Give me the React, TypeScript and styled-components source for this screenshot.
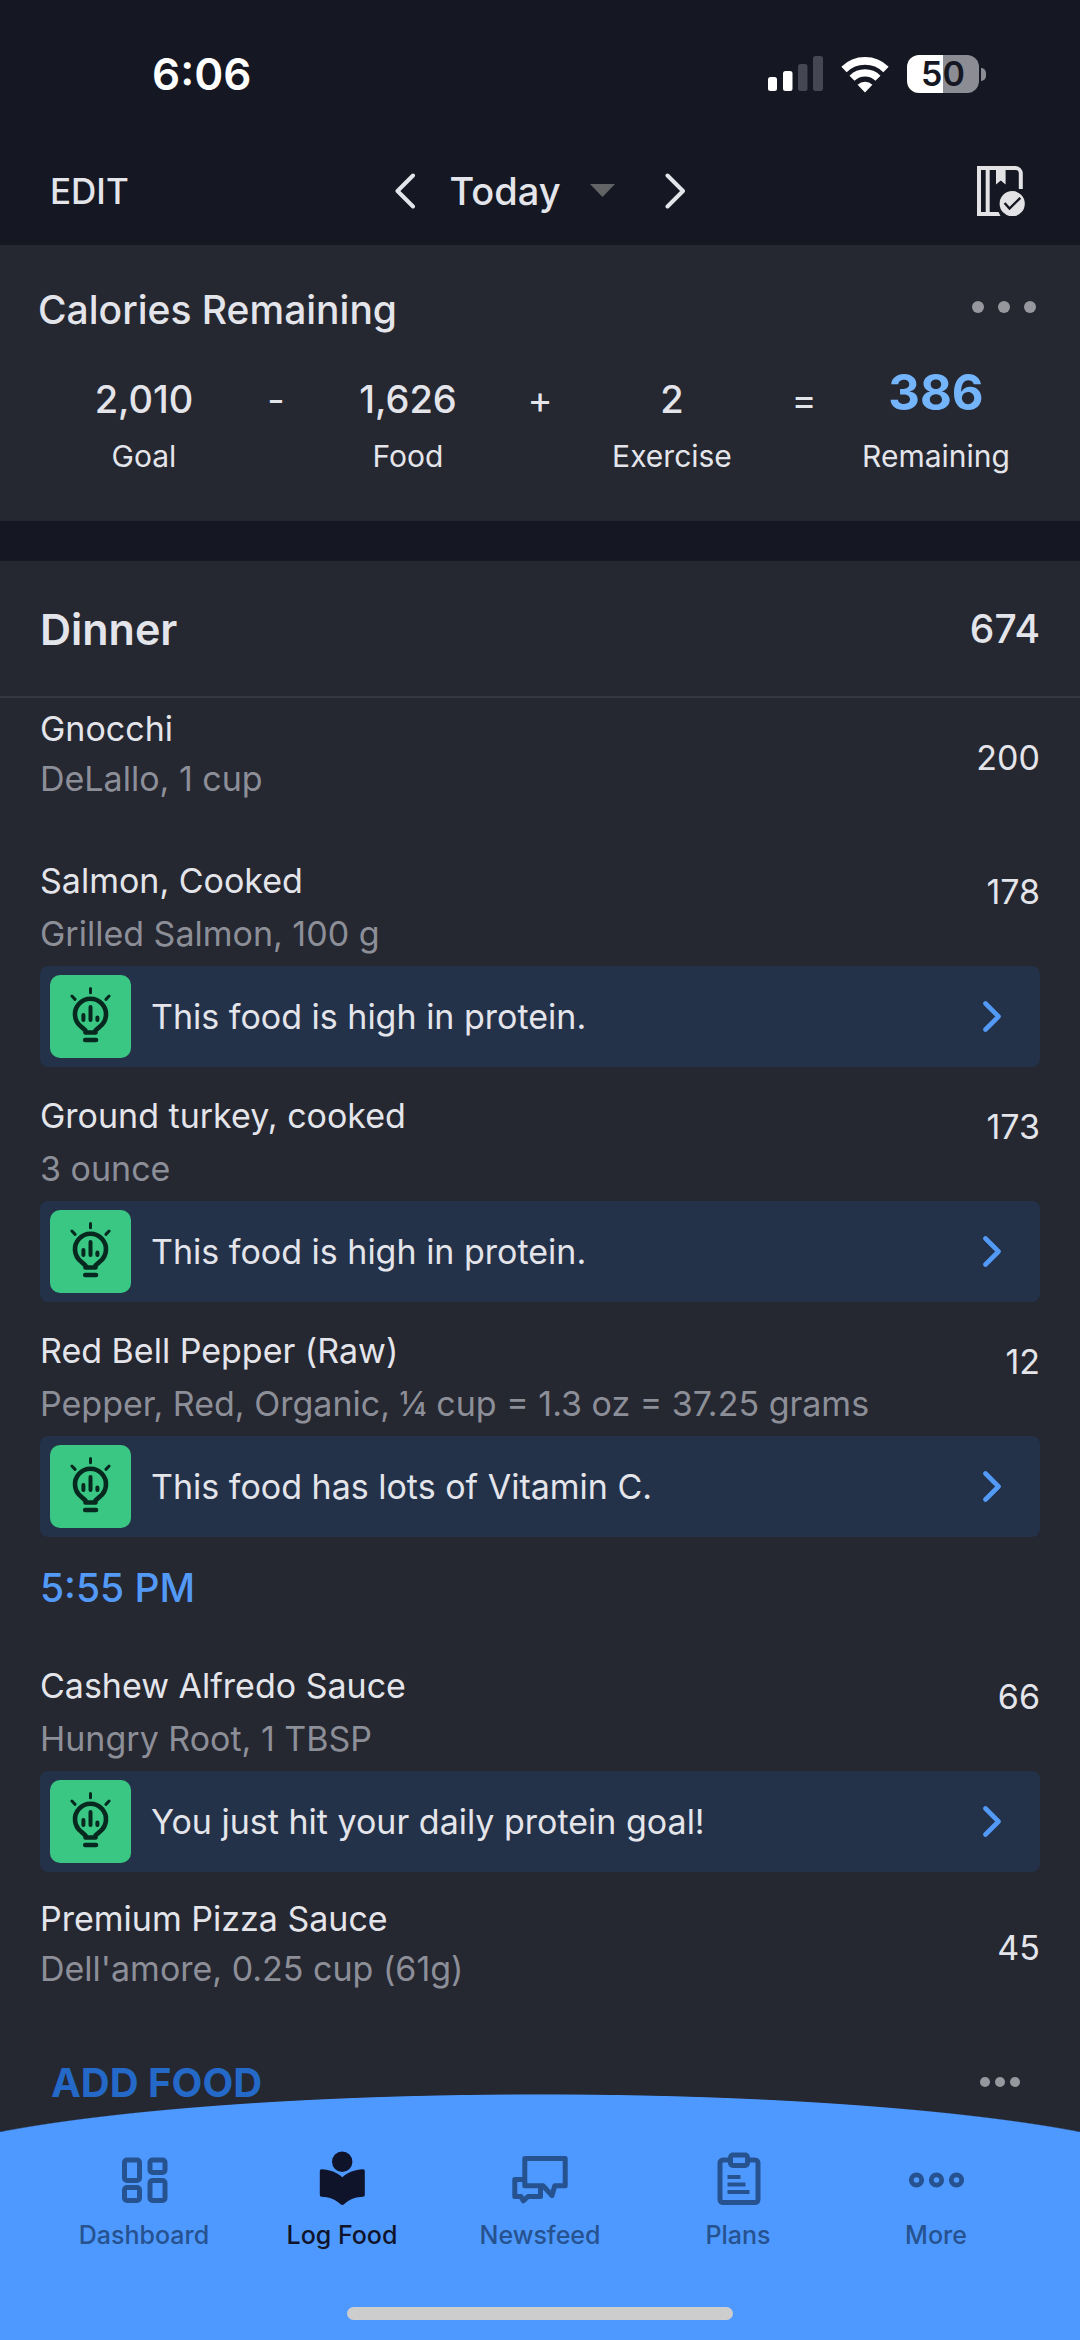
import React from "react";
import styled, { createGlobalStyle, css } from "styled-components";

const color = {
  base: "#151722",
  panel: "#252731",
  line: "#343642",
  text: "#e4e5eb",
  muted: "#8d8f98",
  blue: "#5399f6",
  brand: "#4e99ff",
  insight: "#233149",
  green: "#39c783",
};

const GlobalStyle = createGlobalStyle`
  *, *::before, *::after { box-sizing: border-box; }
  body {
    margin: 0;
    background: ${color.base};
    color: ${color.text};
    font-family: Inter, "Liberation Sans", sans-serif;
  }
  h1, h2, p, ul, dl, dd, dt { margin: 0; padding: 0; font: inherit; }
  ul { list-style: none; }
  svg { display: block; flex: none; }
`;

const Screen = styled.div`
  display: flex;
  flex-direction: column;
  height: 100vh;
  overflow: hidden;
`;

const StatusBar = styled.div`
  display: flex;
  flex: none;
  align-items: center;
  justify-content: space-between;
  height: 136px;
  padding: 12px 94px 0 152px;
`;

const Clock = styled.span`
  color: #fff;
  font-size: 44px;
  font-weight: 600;
`;

const StatusIcons = styled.div`
  display: flex;
  align-items: center;
  gap: 18px;
`;

const Battery = styled.div`
  display: flex;
  align-items: center;
  gap: 2px;
`;

const BatteryBody = styled.div`
  width: 72px;
  height: 38px;
  border-radius: 12px;
  background: linear-gradient(90deg, #fff 50%, #8c8d94 50%);
  color: ${color.base};
  font-size: 34px;
  font-weight: 600;
  line-height: 38px;
  text-align: center;
`;

const BatteryTip = styled.div`
  width: 5px;
  height: 13px;
  border-radius: 0 6px 6px 0;
  background: #8c8d94;
`;

const IconButton = styled.button`
  display: flex;
  align-items: center;
  padding: 0;
  border: 0;
  background: none;
  color: inherit;
  font: inherit;
`;

const TopBar = styled.header`
  display: grid;
  flex: none;
  grid-template-columns: 1fr auto 1fr;
  align-items: center;
  height: 109px;
  padding: 0 55px 0 50px;
`;

const EditButton = styled(IconButton)`
  justify-self: start;
  font-size: 35px;
  font-weight: 500;
`;

const DayPicker = styled.div`
  display: flex;
  align-items: center;
  gap: 50px;
  margin-left: 5px;
`;

const DayButton = styled(IconButton)`
  gap: 29px;
  margin-left: -16px;
  font-size: 38px;
  font-weight: 500;
`;

const DiaryButton = styled(IconButton)`
  justify-self: end;
`;

const Summary = styled.section`
  flex: none;
  height: 276px;
  padding: 36px 38px 0;
  background: ${color.panel};
`;

const SummaryHead = styled.div`
  display: flex;
  align-items: center;
  justify-content: space-between;
  height: 56px;
  padding-right: 6px;
`;

const SummaryTitle = styled.h1`
  font-size: 39px;
  font-weight: 500;
`;

const SummaryMenu = styled(IconButton)`
  align-self: flex-start;
  height: 52px;
`;

const Equation = styled.dl`
  display: grid;
  grid-template-columns: repeat(7, minmax(0, 1fr));
  padding: 24px 40px 0;
`;

const Term = styled.div`
  display: flex;
  flex-direction: column-reverse;
  align-items: center;
  justify-content: flex-end;
  white-space: nowrap;
`;

const TermValue = styled.dd<{ $result?: boolean }>`
  height: 76px;
  font-size: 38px;
  font-weight: 500;
  line-height: 76px;
  ${(p) =>
    p.$result &&
    css`
      color: #74b4fb;
      font-size: 49px;
      font-weight: 700;
      line-height: 64px;
    `}
`;

const TermLabel = styled.dt`
  font-size: 30px;
  line-height: 38px;
`;

const Sign = styled.div`
  font-size: 38px;
  line-height: 76px;
  text-align: center;
`;

const Meal = styled.main`
  flex: 1;
  min-height: 0;
  margin-top: 40px;
  background: ${color.panel};
  overflow: hidden;
`;

const MealHead = styled.header`
  display: flex;
  align-items: center;
  justify-content: space-between;
  height: 137px;
  padding: 0 40px;
  border-bottom: 2px solid ${color.line};
`;

const MealName = styled.h2`
  font-size: 43px;
  font-weight: 600;
`;

const MealTotal = styled.span`
  font-size: 39px;
  font-weight: 500;
`;

const FoodList = styled.ul`
  padding: 0 40px;
`;

const Food = styled.li<{ $plain: boolean }>`
  padding-bottom: ${(p) => (p.$plain ? 30 : 16)}px;
`;

const FoodRow = styled.div<{ $plain: boolean }>`
  display: flex;
  justify-content: space-between;
  height: ${(p) => (p.$plain ? 120 : 118)}px;
  font-size: 34px;
`;

const FoodText = styled.div<{ $plain: boolean }>`
  display: flex;
  flex-direction: column;
  gap: ${(p) => (p.$plain ? 0 : 3)}px;
  padding-top: ${(p) => (p.$plain ? 6 : 8)}px;
  line-height: 50px;
`;

const FoodDetail = styled.p`
  color: ${color.muted};
`;

const FoodCalories = styled.span<{ $plain: boolean }>`
  line-height: ${(p) => (p.$plain ? 120 : 88)}px;
`;

const Insight = styled.button`
  display: flex;
  align-items: center;
  width: 100%;
  height: 101px;
  padding: 0 39px 0 10px;
  border: 0;
  border-radius: 8px;
  background: ${color.insight};
  color: ${color.text};
  font: inherit;
  font-size: 34px;
  text-align: left;
`;

const InsightBadge = styled.span`
  display: flex;
  width: 81px;
  height: 83px;
  margin-right: 20px;
  border-radius: 10px;
  background: ${color.green};
`;

const InsightText = styled.span`
  flex: 1;
`;

const MealTime = styled.li`
  padding-bottom: 30px;
  color: ${color.blue};
  font-size: 39px;
  font-weight: 500;
  line-height: 70px;
`;

const MealActions = styled.div`
  display: flex;
  align-items: center;
  justify-content: space-between;
  height: 88px;
  padding: 0 60px 0 51px;
`;

const AddFood = styled(IconButton)`
  color: #2469c8;
  font-size: 40px;
  font-weight: 700;
`;

const Dots = styled.span<{ $size: number; $gap: number }>`
  display: flex;
  gap: ${(p) => p.$gap}px;

  i {
    width: ${(p) => p.$size}px;
    height: ${(p) => p.$size}px;
    border-radius: 50%;
    background: #97989e;
  }
`;

const TabBar = styled.nav`
  z-index: 1;
  flex: none;
  margin-top: -37px;
  padding: 57px 45px 20px;
  background:
    radial-gradient(61% 87px at 50% 87px, ${color.brand} 99%, transparent 100%) no-repeat,
    linear-gradient(${color.brand}, ${color.brand}) 0 38px no-repeat;
`;

const Tabs = styled.ul`
  display: grid;
  grid-template-columns: repeat(5, 1fr);
`;

const Tab = styled.a<{ $active?: boolean }>`
  display: flex;
  flex-direction: column;
  align-items: center;
  gap: 12px;
  color: ${(p) => (p.$active ? "#10142a" : "#26528f")};
  font-size: 25px;
  font-weight: 500;
  line-height: 32px;
  text-decoration: none;
`;

const HomeIndicator = styled.div`
  width: 39%;
  height: 13px;
  margin: 56px auto 0;
  border-radius: 7px;
  background: #cdcdcd;
`;

const Chevron = ({ left, small }: { left?: boolean; small?: boolean }) => (
  <svg
    width={small ? 18 : 20}
    height={small ? 31 : 36}
    viewBox={small ? "0 0 18 31" : "0 0 20 36"}
    fill="none"
    stroke={small ? color.blue : "currentColor"}
    strokeWidth={small ? 4.6 : 4}
    strokeLinecap="round"
    strokeLinejoin="round"
  >
    {small ? (
      <path d="M2.500 2.500 15.500 15.500 2.500 28.500" />
    ) : (
      <path d={left ? "M18 2.500 2.500 18 18 33.500" : "M2.500 2.500 18 18 2.500 33.500"} />
    )}
  </svg>
);

const Signal = () => (
  <svg width="55" height="36" viewBox="0 0 55 36">
    <rect x="0" y="21" width="9" height="14" rx="2.5" fill="#fff" />
    <rect x="15" y="15" width="9.5" height="20" rx="2.5" fill="#fff" />
    <rect x="30" y="8" width="9.5" height="27" rx="2.5" fill="#454753" />
    <rect x="45" y="0" width="10" height="35" rx="2.5" fill="#454753" />
  </svg>
);

const Wifi = () => (
  <svg width="48" height="37" viewBox="0 0 48 37" fill="none" stroke="#fff" strokeWidth="7.6">
    <path d="M3 13.5a30 30 0 0 1 42 0" />
    <path d="M11 22.2a18.5 18.5 0 0 1 26 0" strokeWidth="7.2" />
    <path d="M24 36.5 16.6 28.8a10.5 10.5 0 0 1 14.8 0Z" fill="#fff" stroke="none" />
  </svg>
);

const DiaryIcon = () => (
  <svg width="48" height="50" viewBox="0 0 48 50" fill="none">
    <path d="M43.8 23V7.5a5.5 5.5 0 0 0-5.5-5.5H2v46h19" stroke="#e3e3e5" strokeWidth="4" />
    <path d="M20 46h1.5l2 4H19Z" fill="#e3e3e5" />
    <path d="M10.7 2v46" stroke="#e3e3e5" strokeWidth="4" />
    <path d="M19 2h9.6v16.4l-4.8-4-4.8 4Z" fill="#e3e3e5" />
    <circle cx="35.2" cy="37.7" r="12.6" fill="#e3e3e5" />
    <path d="m27.6 37 4.9 5.6 10.8-10.8" stroke={color.base} strokeWidth="2.4" />
  </svg>
);

const BulbIcon = () => (
  <svg
    width="81"
    height="83"
    viewBox="0 0 81 83"
    fill="none"
    stroke="#06281e"
    strokeWidth="4.6"
    strokeLinecap="round"
  >
    <path
      d="M35.500 57.500V55.500L31 51.500A15.500 15.500 0 1 1 50 51.500L45.500 55.500V57.500Z"
      strokeLinejoin="round"
    />
    <path d="M35.200 65h10.800" />
    <path d="M40.500 32v13M33.400 40v5M47.400 42.500v2.500" strokeWidth="4" />
    <path d="M40.500 13.400v4.400M21.900 21l3.200 3.400M59.100 21l-3.200 3.400" strokeWidth="3" />
  </svg>
);

const DashboardIcon = () => (
  <svg width="56" height="56" viewBox="0 0 56 56" fill="none" stroke="currentColor" strokeWidth="5">
    <rect x="8.5" y="9" width="15" height="20.5" rx="2.5" />
    <rect x="34" y="9" width="15" height="12.5" rx="2.5" />
    <rect x="8.5" y="36.5" width="15" height="13" rx="2.5" />
    <rect x="34" y="29.5" width="15" height="20" rx="2.5" />
  </svg>
);

const LogFoodIcon = () => (
  <svg width="56" height="56" viewBox="0 0 56 56" fill="currentColor">
    <circle cx="28.2" cy="10.8" r="10.2" />
    <path d="M28.3 26.2C23 21.5 16 18.4 7.5 18.2A1.8 1.8 0 0 0 5.8 20v24a1.8 1.8 0 0 0 1.7 1.8c7 .2 13.2 2.2 18.8 7.2 1.4 1.3 2.6 1.3 4 0 5.6-5 11.8-7 18.8-7.2A1.8 1.8 0 0 0 50.8 44V20a1.8 1.8 0 0 0-1.7-1.8C40.6 18.4 33.6 21.5 28.3 26.2Z" />
  </svg>
);

const NewsfeedIcon = () => (
  <svg
    width="56"
    height="56"
    viewBox="0 0 56 56"
    fill="none"
    stroke="currentColor"
    strokeWidth="5"
    strokeLinejoin="round"
  >
    <path d="M12.8 7.5h40.4v27.3H42.8L40 44.500 31 34.800H12.800Z" />
    <path d="M12.800 28.500H2.800v17h6.200l2.300 4.300 4.700-4.300h12.500v-9" />
  </svg>
);

const PlansIcon = () => (
  <svg width="56" height="56" viewBox="0 0 56 56" fill="none" stroke="currentColor" strokeWidth="5">
    <path d="M18 9h-5a3 3 0 0 0-3 3v36.5a3 3 0 0 0 3 3h32a3 3 0 0 0 3-3V12a3 3 0 0 0-3-3h-5" />
    <rect x="20.5" y="4" width="17" height="10.5" rx="2.5" />
    <path d="M17.5 26h13M17.5 33.5h18M17.5 41h22" strokeWidth="4" />
  </svg>
);

const MoreIcon = () => (
  <svg width="56" height="56" viewBox="0 0 56 56" fill="none" stroke="currentColor" strokeWidth="4.8">
    <circle cx="8.5" cy="29" r="5.2" />
    <circle cx="28.5" cy="29" r="5.2" />
    <circle cx="48.5" cy="29" r="5.2" />
  </svg>
);

type FoodEntry = {
  name: string;
  detail: string;
  calories: number;
  insight?: string;
};

const earlyFoods: FoodEntry[] = [
  { name: "Gnocchi", detail: "DeLallo, 1 cup", calories: 200 },
  {
    name: "Salmon, Cooked",
    detail: "Grilled Salmon, 100 g",
    calories: 178,
    insight: "This food is high in protein.",
  },
  {
    name: "Ground turkey, cooked",
    detail: "3 ounce",
    calories: 173,
    insight: "This food is high in protein.",
  },
  {
    name: "Red Bell Pepper (Raw)",
    detail: "Pepper, Red, Organic, ¼ cup = 1.3 oz = 37.25 grams",
    calories: 12,
    insight: "This food has lots of Vitamin C.",
  },
];

const lateFoods: FoodEntry[] = [
  {
    name: "Cashew Alfredo Sauce",
    detail: "Hungry Root, 1 TBSP",
    calories: 66,
    insight: "You just hit your daily protein goal!",
  },
  { name: "Premium Pizza Sauce", detail: "Dell'amore, 0.25 cup (61g)", calories: 45 },
];

const tabs = [
  { label: "Dashboard", icon: <DashboardIcon /> },
  { label: "Log Food", icon: <LogFoodIcon />, active: true },
  { label: "Newsfeed", icon: <NewsfeedIcon /> },
  { label: "Plans", icon: <PlansIcon /> },
  { label: "More", icon: <MoreIcon /> },
];

const FoodItem = ({ name, detail, calories, insight }: FoodEntry) => {
  const plain = !insight;
  return (
    <Food $plain={plain}>
      <FoodRow $plain={plain}>
        <FoodText $plain={plain}>
          <p>{name}</p>
          <FoodDetail>{detail}</FoodDetail>
        </FoodText>
        <FoodCalories $plain={plain}>{calories}</FoodCalories>
      </FoodRow>
      {insight && (
        <Insight type="button">
          <InsightBadge>
            <BulbIcon />
          </InsightBadge>
          <InsightText>{insight}</InsightText>
          <Chevron small />
        </Insight>
      )}
    </Food>
  );
};

const EquationTerm = ({ label, value, result }: { label: string; value: string; result?: boolean }) => (
  <Term>
    <TermLabel>{label}</TermLabel>
    <TermValue $result={result}>{value}</TermValue>
  </Term>
);

export default function App() {
  return (
    <>
      <GlobalStyle />
      <Screen>
        <StatusBar>
          <Clock>6:06</Clock>
          <StatusIcons>
            <Signal />
            <Wifi />
            <Battery>
              <BatteryBody>50</BatteryBody>
              <BatteryTip />
            </Battery>
          </StatusIcons>
        </StatusBar>

        <TopBar>
          <EditButton type="button">EDIT</EditButton>
          <DayPicker>
            <IconButton type="button" aria-label="Previous day">
              <Chevron left />
            </IconButton>
            <DayButton type="button">
              Today
              <svg width="25" height="13" viewBox="0 0 25 13" fill="#626365">
                <path d="M0 0h25L12.5 13Z" />
              </svg>
            </DayButton>
            <IconButton type="button" aria-label="Next day">
              <Chevron />
            </IconButton>
          </DayPicker>
          <DiaryButton type="button" aria-label="Complete diary">
            <DiaryIcon />
          </DiaryButton>
        </TopBar>

        <Summary>
          <SummaryHead>
            <SummaryTitle>Calories Remaining</SummaryTitle>
            <SummaryMenu type="button" aria-label="Calorie options">
              <Dots $size={12} $gap={14}>
                <i />
                <i />
                <i />
              </Dots>
            </SummaryMenu>
          </SummaryHead>
          <Equation>
            <EquationTerm label="Goal" value="2,010" />
            <Sign>-</Sign>
            <EquationTerm label="Food" value="1,626" />
            <Sign>+</Sign>
            <EquationTerm label="Exercise" value="2" />
            <Sign>=</Sign>
            <EquationTerm label="Remaining" value="386" result />
          </Equation>
        </Summary>

        <Meal>
          <MealHead>
            <MealName>Dinner</MealName>
            <MealTotal>674</MealTotal>
          </MealHead>
          <FoodList>
            {earlyFoods.map((food) => (
              <FoodItem key={food.name} {...food} />
            ))}
            <MealTime>5:55 PM</MealTime>
            {lateFoods.map((food) => (
              <FoodItem key={food.name} {...food} />
            ))}
          </FoodList>
          <MealActions>
            <AddFood type="button">ADD FOOD</AddFood>
            <IconButton type="button" aria-label="Meal options">
              <Dots $size={10} $gap={5}>
                <i />
                <i />
                <i />
              </Dots>
            </IconButton>
          </MealActions>
        </Meal>

        <TabBar>
          <Tabs>
            {tabs.map((tab) => (
              <li key={tab.label}>
                <Tab href="#" $active={tab.active}>
                  {tab.icon}
                  {tab.label}
                </Tab>
              </li>
            ))}
          </Tabs>
          <HomeIndicator />
        </TabBar>
      </Screen>
    </>
  );
}
